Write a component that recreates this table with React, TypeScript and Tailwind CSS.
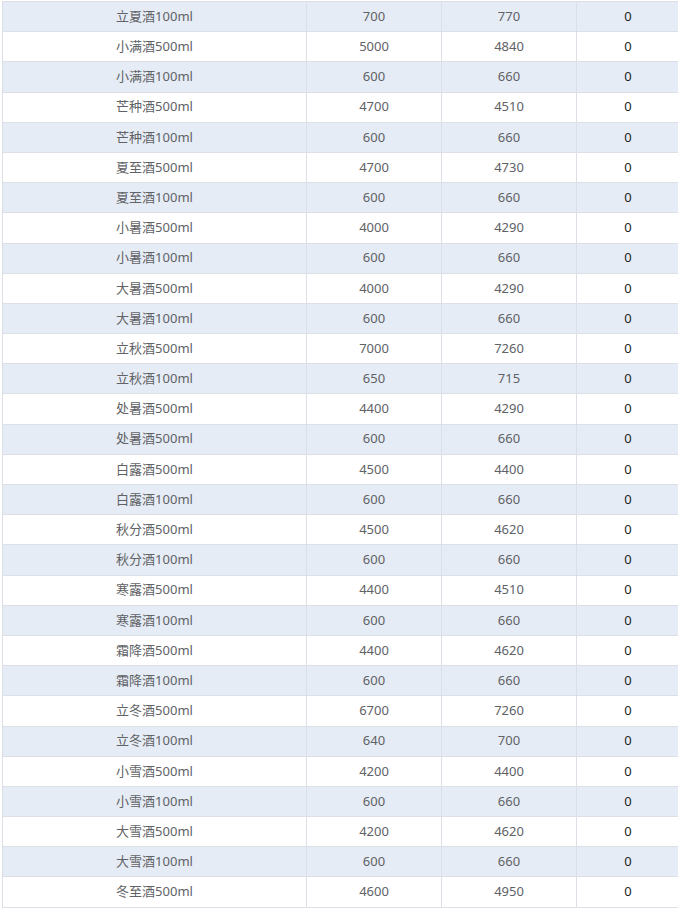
const rows: [string, number, number, number][] = [
  ["立夏酒100ml", 700, 770, 0],
  ["小满酒500ml", 5000, 4840, 0],
  ["小满酒100ml", 600, 660, 0],
  ["芒种酒500ml", 4700, 4510, 0],
  ["芒种酒100ml", 600, 660, 0],
  ["夏至酒500ml", 4700, 4730, 0],
  ["夏至酒100ml", 600, 660, 0],
  ["小暑酒500ml", 4000, 4290, 0],
  ["小暑酒100ml", 600, 660, 0],
  ["大暑酒500ml", 4000, 4290, 0],
  ["大暑酒100ml", 600, 660, 0],
  ["立秋酒500ml", 7000, 7260, 0],
  ["立秋酒100ml", 650, 715, 0],
  ["处暑酒500ml", 4400, 4290, 0],
  ["处暑酒500ml", 600, 660, 0],
  ["白露酒500ml", 4500, 4400, 0],
  ["白露酒100ml", 600, 660, 0],
  ["秋分酒500ml", 4500, 4620, 0],
  ["秋分酒100ml", 600, 660, 0],
  ["寒露酒500ml", 4400, 4510, 0],
  ["寒露酒100ml", 600, 660, 0],
  ["霜降酒500ml", 4400, 4620, 0],
  ["霜降酒100ml", 600, 660, 0],
  ["立冬酒500ml", 6700, 7260, 0],
  ["立冬酒100ml", 640, 700, 0],
  ["小雪酒500ml", 4200, 4400, 0],
  ["小雪酒100ml", 600, 660, 0],
  ["大雪酒500ml", 4200, 4620, 0],
  ["大雪酒100ml", 600, 660, 0],
  ["冬至酒500ml", 4600, 4950, 0],
];

export default function App() {
  return (
    <div
      className="w-[678px] h-[908px] overflow-hidden bg-white pt-px pl-[2px] text-[13px]"
      style={{ fontFamily: '"Noto Sans", "Noto Sans CJK SC", sans-serif' }}
    >
      <div className="w-[720px] border-t border-l border-[#dcdfe6]">
        {rows.map(([name, a, b, c], i) => (
          <div
            key={i}
            className={
              "grid grid-cols-[304px_135px_135px_146px] h-[30.2px] border-b border-[#dcdfe6] " +
              (i % 2 === 0 ? "bg-[#e6ecf5]" : "bg-white")
            }
          >
            <div className="flex items-center justify-center border-r border-[#dcdfe6] text-[#606266]">
              {name}
            </div>
            <div className="flex items-center justify-center border-r border-[#dcdfe6] text-[#606266]">
              {a}
            </div>
            <div className="flex items-center justify-center border-r border-[#dcdfe6] text-[#606266]">
              {b}
            </div>
            <div className="flex items-center justify-center pr-[44px] text-[#1f1f1f]">
              {c}
            </div>
          </div>
        ))}
      </div>
    </div>
  );
}
